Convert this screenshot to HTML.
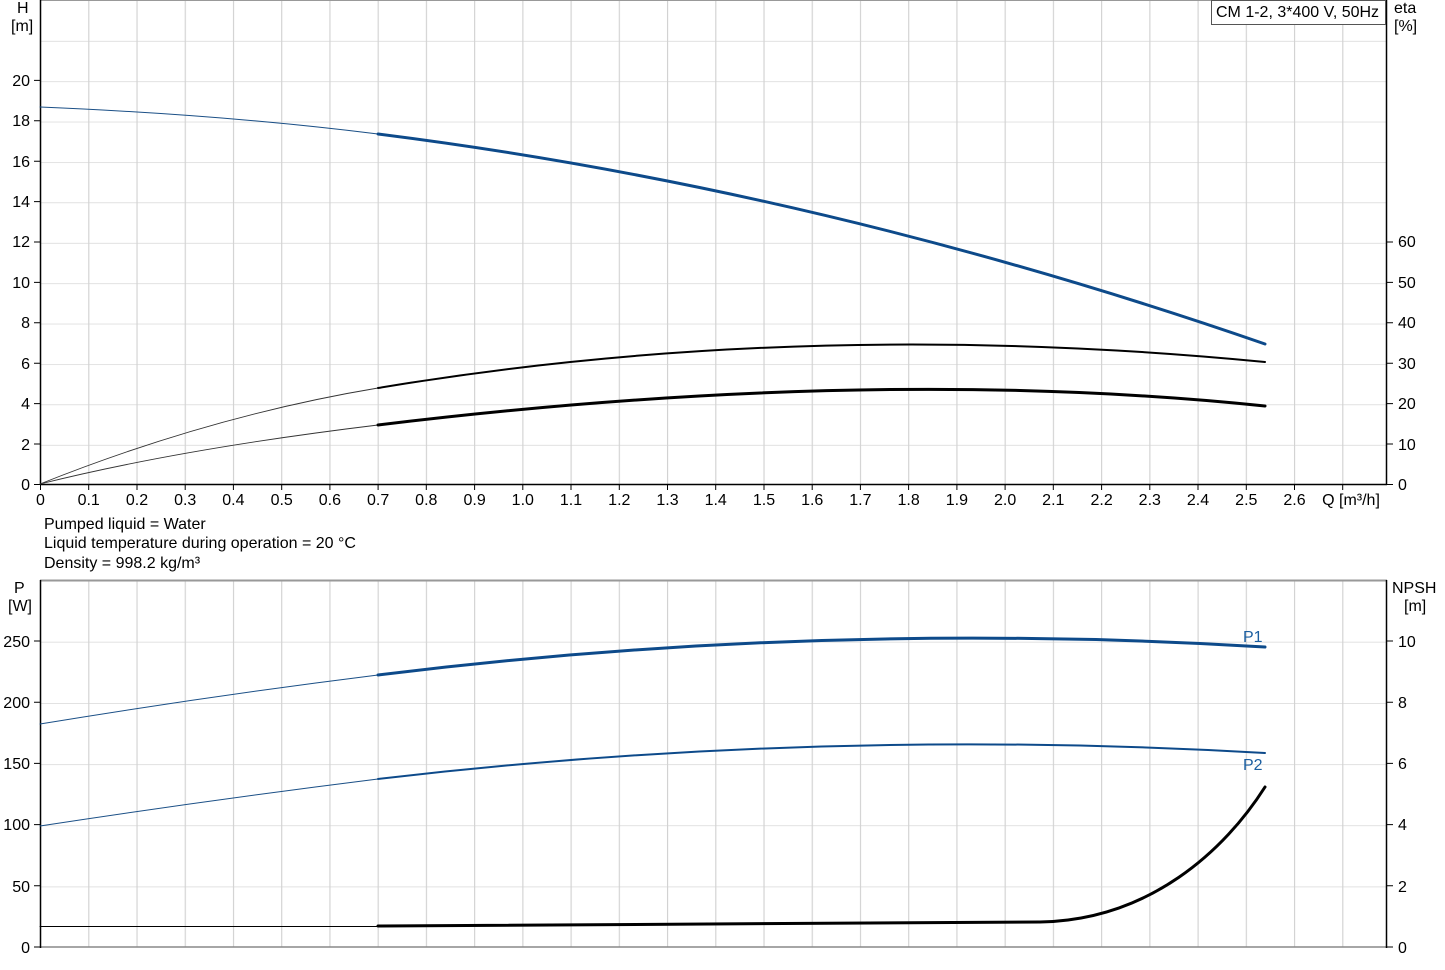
<!DOCTYPE html>
<html><head><meta charset="utf-8"><style>
html,body{margin:0;padding:0;background:#fff;width:1445px;height:970px;overflow:hidden}
svg{display:block;font-family:"Liberation Sans",Arial,sans-serif;font-size:16px}
</style></head><body>
<svg width="1445" height="970" viewBox="0 0 1445 970" xmlns="http://www.w3.org/2000/svg">
<defs>
<pattern id="v1" x="40" y="0" width="48.23" height="10" patternUnits="userSpaceOnUse"><line x1="0.5" y1="0" x2="0.5" y2="10" stroke="#d2d2d2" stroke-width="1.3"/></pattern>
<pattern id="h1" x="0" y="0.5" width="10" height="40.4" patternUnits="userSpaceOnUse"><line x1="0" y1="0" x2="10" y2="0" stroke="#d2d2d2" stroke-width="1.3"/></pattern>
<pattern id="h2" x="0" y="580.6" width="10" height="61.2" patternUnits="userSpaceOnUse"><line x1="0" y1="0" x2="10" y2="0" stroke="#d2d2d2" stroke-width="1.3"/></pattern>
</defs>
<rect x="40" y="0" width="1347" height="484" fill="url(#v1)"/>
<rect x="40" y="40" width="1347" height="444" fill="url(#h1)"/>
<line x1="40" y1="0.5" x2="1387" y2="0.5" stroke="#999" stroke-width="1"/>
<line x1="40.5" y1="0" x2="40.5" y2="485" stroke="#000" stroke-width="1.5"/>
<line x1="1386.5" y1="0" x2="1386.5" y2="485" stroke="#000" stroke-width="1.5"/>
<line x1="40" y1="484.5" x2="1387" y2="484.5" stroke="#000" stroke-width="1.5"/>
<rect x="40" y="580" width="1347" height="367" fill="url(#v1)"/>
<rect x="40" y="580" width="1347" height="367" fill="url(#h2)"/>
<line x1="40" y1="580.5" x2="1387" y2="580.5" stroke="#999" stroke-width="2"/>
<line x1="40" y1="947" x2="1387" y2="947" stroke="#888" stroke-width="1.5"/>
<line x1="40.5" y1="580" x2="40.5" y2="948" stroke="#000" stroke-width="1.5"/>
<line x1="1386.5" y1="580" x2="1386.5" y2="948" stroke="#000" stroke-width="1.5"/>

<g stroke="#000" stroke-width="1">
<path d="M40.5 484v6M88.7 484v6M137 484v6M185.2 484v6M233.4 484v6M281.7 484v6M329.9 484v6M378.1 484v6M426.3 484v6M474.6 484v6M522.8 484v6M571 484v6M619.3 484v6M667.5 484v6M715.7 484v6M764 484v6M812.2 484v6M860.4 484v6M908.6 484v6M956.9 484v6M1005.1 484v6M1053.3 484v6M1101.6 484v6M1149.8 484v6M1198 484v6M1246.3 484v6M1294.5 484v6M1342.7 484v6"/>
<path d="M34 484.5h6M34 444h6M34 403.6h6M34 363.2h6M34 322.8h6M34 282.4h6M34 242h6M34 201.6h6M34 161.2h6M34 120.8h6M34 80.4h6"/>
<path d="M1387 484.5h6M1387 444h6M1387 403.6h6M1387 363.2h6M1387 322.8h6M1387 282.4h6M1387 242h6"/>
<path d="M34 947h6M34 885.8h6M34 824.6h6M34 763.4h6M34 702.2h6M34 641h6"/>
<path d="M1387 947h6M1387 885.8h6M1387 824.6h6M1387 763.4h6M1387 702.2h6M1387 641h6"/>
</g>

<g fill="#000" text-anchor="end">
<text x="30" y="490">0</text><text x="30" y="450">2</text><text x="30" y="409">4</text><text x="30" y="369">6</text><text x="30" y="328">8</text><text x="30" y="288">10</text><text x="30" y="247">12</text><text x="30" y="207">14</text><text x="30" y="167">16</text><text x="30" y="126">18</text><text x="30" y="86">20</text>
<text x="30" y="953">0</text><text x="30" y="892">50</text><text x="30" y="830">100</text><text x="30" y="769">150</text><text x="30" y="708">200</text><text x="30" y="647">250</text>
</g>
<g fill="#000">
<text x="1398" y="490">0</text><text x="1398" y="450">10</text><text x="1398" y="409">20</text><text x="1398" y="369">30</text><text x="1398" y="328">40</text><text x="1398" y="288">50</text><text x="1398" y="247">60</text>
<text x="1398" y="953">0</text><text x="1398" y="892">2</text><text x="1398" y="830">4</text><text x="1398" y="769">6</text><text x="1398" y="708">8</text><text x="1398" y="647">10</text>
<text x="17" y="13">H</text><text x="11" y="31">[m]</text>
<text x="1394" y="13">eta</text><text x="1394" y="31">[%]</text>
<text x="14" y="593">P</text><text x="8" y="611">[W]</text>
<text x="1392" y="593">NPSH</text><text x="1404" y="611">[m]</text>
<text x="44" y="529">Pumped liquid = Water</text>
<text x="44" y="548">Liquid temperature during operation = 20 °C</text>
<text x="44" y="568">Density = 998.2 kg/m³</text>
</g>
<g fill="#000" text-anchor="middle">
<text x="40.5" y="505">0</text><text x="88.7" y="505">0.1</text><text x="137" y="505">0.2</text><text x="185.2" y="505">0.3</text><text x="233.4" y="505">0.4</text><text x="281.7" y="505">0.5</text><text x="329.9" y="505">0.6</text><text x="378.1" y="505">0.7</text><text x="426.3" y="505">0.8</text><text x="474.6" y="505">0.9</text><text x="522.8" y="505">1.0</text><text x="571" y="505">1.1</text><text x="619.3" y="505">1.2</text><text x="667.5" y="505">1.3</text><text x="715.7" y="505">1.4</text><text x="764" y="505">1.5</text><text x="812.2" y="505">1.6</text><text x="860.4" y="505">1.7</text><text x="908.6" y="505">1.8</text><text x="956.9" y="505">1.9</text><text x="1005.1" y="505">2.0</text><text x="1053.3" y="505">2.1</text><text x="1101.6" y="505">2.2</text><text x="1149.8" y="505">2.3</text><text x="1198" y="505">2.4</text><text x="1246.3" y="505">2.5</text><text x="1294.5" y="505">2.6</text><text x="1351" y="505">Q [m³/h]</text>
</g>

<rect x="1211.5" y="0.5" width="174" height="24" fill="#fff" stroke="#555" stroke-width="1"/>
<text x="1216" y="17" fill="#000">CM 1-2, 3*400 V, 50Hz</text>

<g fill="none" stroke-linecap="round">
<path d="M40 107 Q225 114.75 378 134" stroke="#1a4f86" stroke-width="1"/>
<path d="M378 134 Q819 189.5 1265 344" stroke="#0d4a8a" stroke-width="3"/>
<path d="M40 484 Q210 416 378 388" stroke="#333" stroke-width="0.9"/>
<path d="M378 388 Q802 317 1265 362" stroke="#000" stroke-width="2"/>
<path d="M40 484 Q180 449 378 425" stroke="#333" stroke-width="0.9"/>
<path d="M378 425 Q870 365 1265 406" stroke="#000" stroke-width="3"/>
<path d="M40 724 Q210 696 378 675" stroke="#1a4f86" stroke-width="1"/>
<path d="M378 675 Q820 620 1265 647" stroke="#0d4a8a" stroke-width="3"/>
<path d="M40 826 Q210 800 378 779" stroke="#1a4f86" stroke-width="1"/>
<path d="M378 779 Q820 727 1265 753" stroke="#0d4a8a" stroke-width="2"/>
<path d="M40 926.5 H378" stroke="#000" stroke-width="1"/>
<path d="M378 926 L1040 922 C1150 920 1225 850 1265 787" stroke="#000" stroke-width="3"/>
</g>
<text x="1243" y="642" fill="#1a5ea0">P1</text>
<text x="1243" y="770" fill="#1a5ea0">P2</text>
</svg>
</body></html>
